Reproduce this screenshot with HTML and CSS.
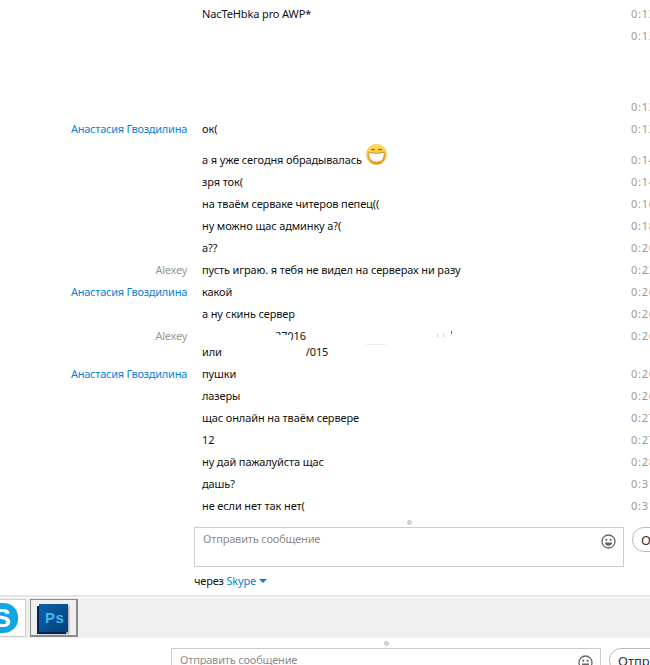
FILE: index.html
```html
<!DOCTYPE html>
<html lang="en">
<head>
    <meta charset="UTF-8">
    <title>Skype</title>
    <link rel="stylesheet" href="styles.css">
</head>
<body>

    <!-- Chat history -->
    <div class="chat">
        <div class="row"><span class="name"></span><span class="msg">NacTeHbka pro AWP*</span><span class="time">0:13</span></div>
        <div class="row"><span class="name"></span><span class="msg"></span><span class="time">0:13</span></div>
        <div class="row row-gap"><span class="name"></span><span class="msg"></span><span class="time">0:13</span></div>
        <div class="row"><span class="name blue">Анастасия Гвоздилина</span><span class="msg">ок(</span><span class="time">0:13</span></div>
        <div class="row row-emoji"><span class="name"></span><span class="msg">а я уже сегодня обрадывалась
            <svg class="emoji" width="21" height="21" viewBox="0 0 21 21">
                <defs>
                    <linearGradient id="face" x1="0" y1="0" x2="0" y2="1">
                        <stop offset="0" stop-color="#ffe45c"/>
                        <stop offset=".55" stop-color="#fbc437"/>
                        <stop offset="1" stop-color="#f0921a"/>
                    </linearGradient>
                </defs>
                <ellipse cx="10.5" cy="10.5" rx="10" ry="10.2" fill="url(#face)" stroke="#eca634" stroke-width=".5"/>
                <path d="M2.800 8.200 Q10.500 11 18.200 8.200 Q19 17.800 10.500 18.300 Q2 17.800 2.800 8.200Z" fill="#fff" stroke="#b9791f" stroke-width=".7"/>
                <path d="M5 6 Q7 4.200 9 6M12 6 Q14 4.200 16 6" fill="none" stroke="#7d5210" stroke-width="1"/>
            </svg></span><span class="time">0:14</span></div>
        <div class="row"><span class="name"></span><span class="msg">зря ток(</span><span class="time">0:14</span></div>
        <div class="row"><span class="name"></span><span class="msg">на тваём серваке читеров пепец((</span><span class="time">0:16</span></div>
        <div class="row"><span class="name"></span><span class="msg">ну можно щас админку а?(</span><span class="time">0:18</span></div>
        <div class="row"><span class="name"></span><span class="msg">а??</span><span class="time">0:20</span></div>
        <div class="row"><span class="name grey">Alexey</span><span class="msg">пусть играю. я тебя не видел на серверах ни разу</span><span class="time">0:22</span></div>
        <div class="row"><span class="name blue">Анастасия Гвоздилина</span><span class="msg">какой</span><span class="time">0:26</span></div>
        <div class="row"><span class="name"></span><span class="msg">а ну скинь сервер</span><span class="time">0:26</span></div>
        <div class="row"><span class="name grey">Alexey</span><span class="msg"><span class="port-one">27016</span><br>или<span class="port-two">/015</span></span><span class="time">0:26</span></div>
        <div class="row"><span class="name blue">Анастасия Гвоздилина</span><span class="msg">пушки</span><span class="time">0:26</span></div>
        <div class="row"><span class="name"></span><span class="msg">лазеры</span><span class="time">0:26</span></div>
        <div class="row"><span class="name"></span><span class="msg">щас онлайн на тваём сервере</span><span class="time">0:27</span></div>
        <div class="row"><span class="name"></span><span class="msg">12</span><span class="time">0:27</span></div>
        <div class="row"><span class="name"></span><span class="msg">ну дай пажалуйста щас</span><span class="time">0:28</span></div>
        <div class="row"><span class="name"></span><span class="msg">дашь?</span><span class="time">0:31</span></div>
        <div class="row"><span class="name"></span><span class="msg">не если нет так нет(</span><span class="time">0:31</span></div>
    </div>

    <!-- Message box -->
    <div class="dot dot-one"></div>
    <div class="composer">
        <div class="input">
            <span class="placeholder">Отправить сообщение</span>
            <svg class="smile" width="15" height="15" viewBox="0 0 15 15">
                <circle cx="7.500" cy="7.500" r="6.500" fill="none" stroke="#666" stroke-width="1.300"/>
                <circle cx="5.300" cy="5.800" r="1.100" fill="#666"/>
                <circle cx="9.700" cy="5.800" r="1.100" fill="#666"/>
                <path d="M3.800 8.500 H11.200 Q10.800 11.800 7.500 11.800 Q4.200 11.800 3.800 8.500Z" fill="#666"/>
            </svg>
        </div>
        <button class="send">Отправить</button>
    </div>
    <div class="via">через <span class="blue">Skype</span> <span class="caret"></span></div>

    <!-- Taskbar strip -->
    <div class="strip">
        <div class="taskbar">
            <div class="task task-skype"><span class="skype-logo">S</span></div>
            <div class="task task-ps"><span class="ps-logo">Ps</span></div>
        </div>
    </div>

    <!-- Second window, cut off by the screenshot -->
    <div class="dot dot-two"></div>
    <div class="composer composer-two">
        <div class="input">
            <span class="placeholder">Отправить сообщение</span>
            <svg class="smile" width="15" height="15" viewBox="0 0 15 15">
                <circle cx="7.500" cy="7.500" r="6.500" fill="none" stroke="#666" stroke-width="1.300"/>
                <circle cx="5.300" cy="5.800" r="1.100" fill="#666"/>
                <circle cx="9.700" cy="5.800" r="1.100" fill="#666"/>
                <path d="M3.800 8.500 H11.200 Q10.800 11.800 7.500 11.800 Q4.200 11.800 3.800 8.500Z" fill="#666"/>
            </svg>
        </div>
        <button class="send">Отправить</button>
    </div>

</body>
</html>
```

FILE: styles.css
```css
html, body {
    margin: 0;
    padding: 0;
    height: 665px;
    overflow: hidden;
    background: #fff;
    font-family: 'Noto Sans', sans-serif;
    font-size: 11px;
    line-height: 16px;
    letter-spacing: -0.17px;
    color: #111;
}

/* Chat history */
.chat {
    padding-top: 3px;
}

.row {
    display: grid;
    grid-template-columns: 187px 414px 60px;
    column-gap: 15px;
    align-items: start;
    padding: 3px 0;
}

.row-gap {
    margin-top: 49px;
}

.row-emoji {
    padding-top: 4px;
    align-items: end;
}

.name {
    text-align: right;
    letter-spacing: -0.25px;
}

.msg {
    letter-spacing: -0.12px;
}

.blue {
    color: #0a7fd6;
}

.grey {
    color: #999;
}

.time {
    color: #999;
    letter-spacing: 0.7px;
}

.emoji {
    margin-left: 1px;
    vertical-align: -1px;
}

/* Server addresses were painted out by hand in the original */
.port-one {
    position: relative;
    margin-left: 73px;
}

.port-one::before {
    content: "";
    position: absolute;
    left: -1px;
    top: 7px;
    width: 17px;
    height: 7px;
    background: #fff;
}

.port-one::after {
    content: "";
    position: absolute;
    left: 176px;
    top: 3px;
    width: 1px;
    height: 3px;
    background: #667;
    box-shadow: -8px 3px 0 #ccc, -14px 3px 0 #ccc;
}

.port-two {
    position: relative;
    margin-left: 84px;
}

.port-two::after {
    content: "";
    position: absolute;
    left: 60px;
    top: 0;
    width: 20px;
    height: 1px;
    background: #eee;
}

/* Message box */
.dot {
    width: 3px;
    height: 3px;
    border: 1px solid #b9c3d3;
    border-radius: 50%;
    background: #d5dbe6;
}

.dot-one {
    margin: 3px 0 2px 407px;
}

.dot-two {
    margin: 3px 0 2px 384px;
}

.composer {
    display: flex;
    align-items: flex-start;
    gap: 8px;
    margin-left: 194px;
    width: 600px;
}

.composer-two {
    margin-left: 171px;
}

.input {
    box-sizing: border-box;
    flex: none;
    width: 430px;
    height: 40px;
    border: 1px solid #ccc;
    padding: 3px 7px 3px 8px;
    display: flex;
    justify-content: space-between;
    align-items: flex-start;
}

.placeholder {
    color: #8c8c8c;
}

.smile {
    margin-top: 3px;
}

.send {
    box-sizing: border-box;
    height: 25px;
    padding: 0 8px;
    border: 1px solid #bbb;
    border-radius: 12px;
    background: #fff;
    color: #333;
    font-family: 'Noto Sans', sans-serif;
    font-size: 13px;
}

.via {
    margin: 6px 0 0 194px;
    height: 22px;
}

.caret {
    display: inline-block;
    width: 0;
    height: 0;
    margin-left: 0;
    vertical-align: 2px;
    border-left: 4px solid transparent;
    border-right: 4px solid transparent;
    border-top: 4px solid #0a7fd6;
}

/* Taskbar strip */
.strip {
    border-top: 2px solid #e6e6e6;
    padding-top: 1px;
}

.taskbar {
    display: flex;
    gap: 4px;
    height: 40px;
    background: #efefef;
}

.task {
    box-sizing: border-box;
    display: flex;
    align-items: center;
    justify-content: center;
    width: 48px;
    height: 38px;
    margin-top: 1px;
}

.task-skype {
    margin-left: -22px;
    background: #fff;
    border: 1px solid #d0d0d0;
}

.task-ps {
    background: #f0f0f0;
    border: 1px solid #8a8a8a;
    border-right-width: 2px;
    border-bottom-width: 2px;
}

.skype-logo {
    width: 32px;
    height: 30px;
    border-radius: 46%;
    background: #12a5e6;
    color: #fff;
    font-family: 'Liberation Sans', sans-serif;
    font-size: 26px;
    font-weight: 700;
    line-height: 30px;
    text-align: center;
}

.ps-logo {
    box-sizing: border-box;
    width: 29px;
    height: 28px;
    padding-left: 6px;
    background: linear-gradient(135deg, #0a62ad, #04407a);
    box-shadow: -2px 2px 0 #02264e, 1px 2px 2px #999;
    color: #43b8ec;
    font-family: 'Liberation Sans', sans-serif;
    font-size: 15px;
    font-weight: 700;
    letter-spacing: 0.5px;
    line-height: 27px;
}
```
